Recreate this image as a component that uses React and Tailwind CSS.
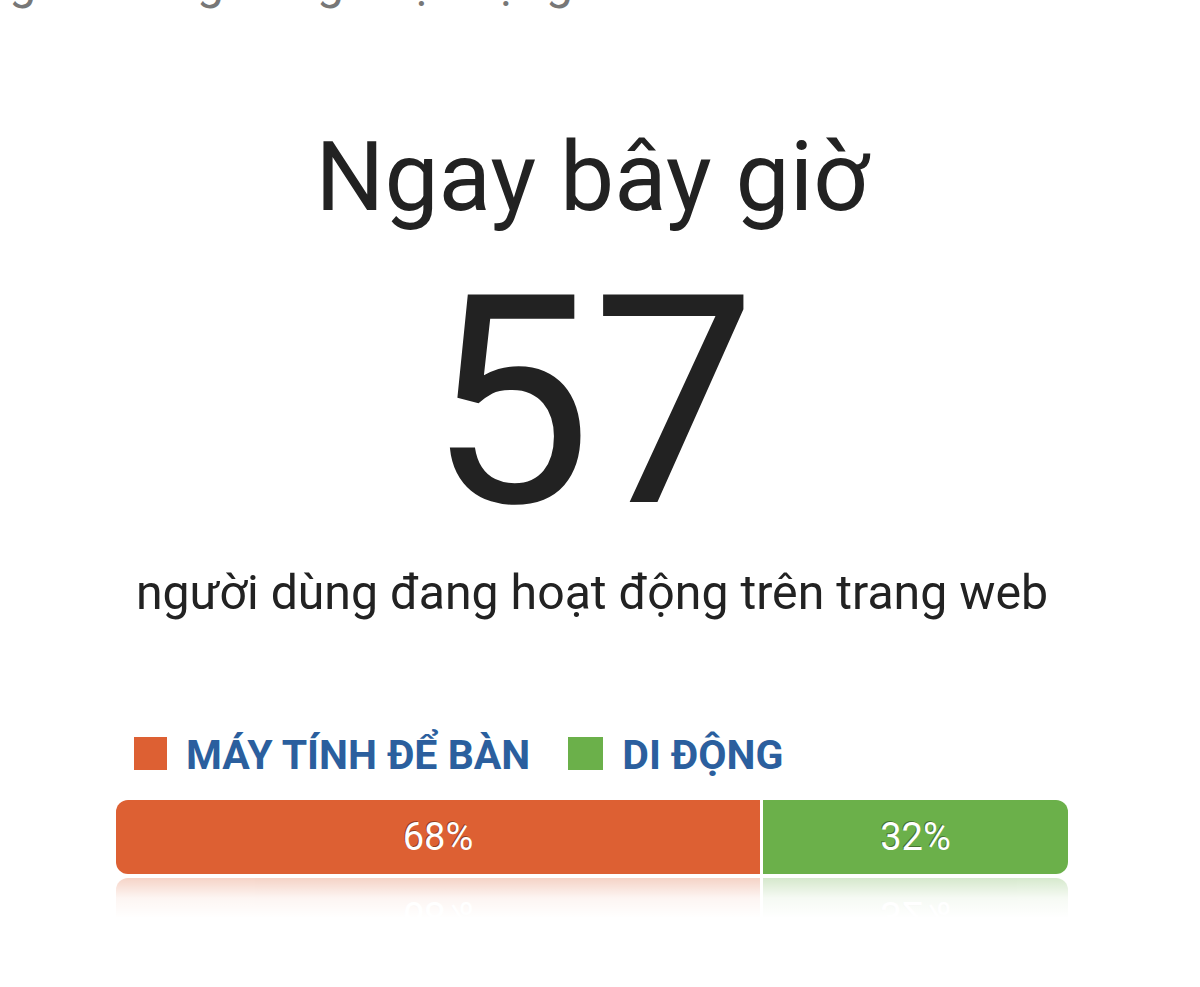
import React from "react";

function Bar() {
  return (
    <div className="flex w-full h-[74px] gap-[3px]">
      <div className="flex items-center justify-center w-[644px] h-full bg-[#dd6033] rounded-l-[12px]">
        <span className="text-white text-[38px] leading-none [text-shadow:-1px_-1px_0_rgba(0,0,0,0.35)]">68%</span>
      </div>
      <div className="flex items-center justify-center flex-1 h-full bg-[#6bb04a] rounded-r-[12px]">
        <span className="text-white text-[38px] leading-none [text-shadow:-1px_-1px_0_rgba(0,0,0,0.35)]">32%</span>
      </div>
    </div>
  );
}

export default function App() {
  return (
    <div className="w-[1200px] h-[987px] bg-white overflow-hidden font-['Roboto',sans-serif]">
      <div className="-mt-[42px] -ml-[25px] text-[48px] leading-none text-[#777] whitespace-nowrap">
        Người dùng đang hoạt động
      </div>
      <div className="ml-[116px] w-[952px] flex flex-col">
        <div className="mt-[123px] text-center text-[96.5px] leading-none text-[#222]">Ngay bây giờ</div>
        <div className="mt-[30px] text-center text-[292px] leading-none text-[#222]">57</div>
        <div className="mt-[21px] text-center text-[48.2px] leading-none text-[#222]">
          người dùng đang hoạt động trên trang web
        </div>
        <div className="mt-[118px] pl-[18px] flex items-start text-[41px] leading-none font-bold text-[#2b5f9e]">
          <div className="mt-[2px] w-[33px] h-[33px] bg-[#dd6033]" />
          <span className="ml-[19px]">MÁY TÍNH ĐỂ BÀN</span>
          <div className="ml-[38px] mt-[2px] w-[35px] h-[33px] bg-[#6bb04a]" />
          <span className="ml-[19px]">DI ĐỘNG</span>
        </div>
        <div className="mt-[24px]">
          <Bar />
        </div>
        <div className="relative mt-[4px] h-[40px] overflow-hidden">
          <div className="-scale-y-100 origin-top translate-y-[74px] opacity-30">
            <Bar />
          </div>
          <div className="absolute inset-0 bg-gradient-to-b from-white/10 via-white/80 to-white" />
        </div>
      </div>
    </div>
  );
}
